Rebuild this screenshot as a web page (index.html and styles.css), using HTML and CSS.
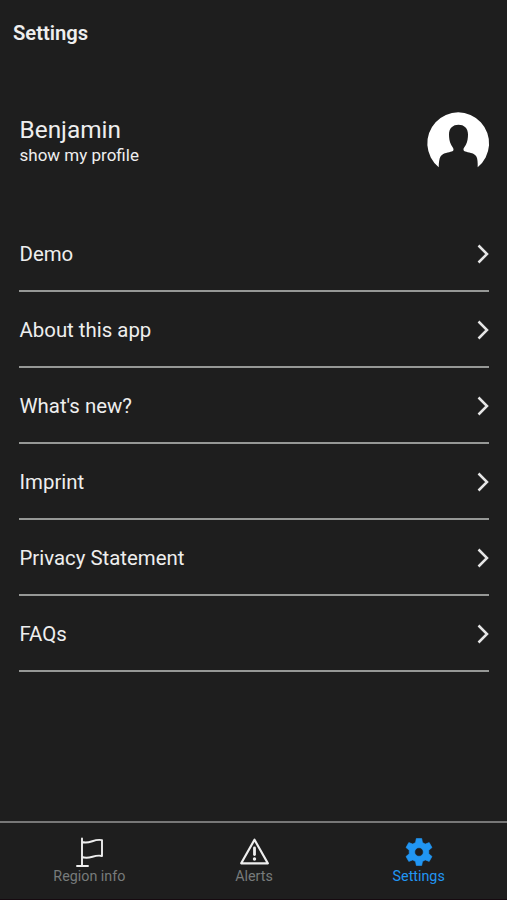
FILE: index.html
```html
<!DOCTYPE html>
<html lang="en">
<head>
<meta charset="utf-8">
<title>Settings</title>
<link rel="stylesheet" href="styles.css">
</head>
<body>
<div class="app">
  <header class="header"><h1>Settings</h1></header>
  <main class="content">
    <section class="profile">
      <div>
        <div class="name">Benjamin</div>
        <div class="link">show my profile</div>
      </div>
      <svg class="avatar" viewBox="0 0 62 62">
        <path fill="#fff" d="M11.700 54.200A30.900 30.900 0 1 1 50.700 54.200C51 44 49.500 41.500 44 40C39 38.800 36.500 38.500 36.500 36.800C36.500 34.500 37.500 34.500 39 31.500C40.500 28.500 41 25 41 21.500C41 15 37 11.700 31.500 11.700S22 15 22 21.500C22 25 22.500 28.500 24 31.500C25.500 34.500 26.500 34.500 26.500 36.800C26.500 38.500 24 38.800 19 40C13.500 41.500 12 44 11.700 54.200Z"/>
      </svg>
    </section>
    <ul class="list">
      <li><span>Demo</span><svg class="chevron" viewBox="0 0 12 20"><path d="M1.500 1.500 10 10 1.500 18.500"/></svg></li>
      <li><span>About this app</span><svg class="chevron" viewBox="0 0 12 20"><path d="M1.500 1.500 10 10 1.500 18.500"/></svg></li>
      <li><span>What's new?</span><svg class="chevron" viewBox="0 0 12 20"><path d="M1.500 1.500 10 10 1.500 18.500"/></svg></li>
      <li><span>Imprint</span><svg class="chevron" viewBox="0 0 12 20"><path d="M1.500 1.500 10 10 1.500 18.500"/></svg></li>
      <li><span>Privacy Statement</span><svg class="chevron" viewBox="0 0 12 20"><path d="M1.500 1.500 10 10 1.500 18.500"/></svg></li>
      <li><span>FAQs</span><svg class="chevron" viewBox="0 0 12 20"><path d="M1.500 1.500 10 10 1.500 18.500"/></svg></li>
    </ul>
  </main>
  <nav class="tabs">
    <a class="tab">
      <svg class="icon" viewBox="0 0 30 30"><g fill="none" stroke="#eee" stroke-width="1.900" stroke-linecap="round" stroke-linejoin="round"><path d="M8 1.500V28.500M3 29H14M8 5C16 7.500 20 1.300 28 3.200V19C20 17 16 23 8 20"/></g></svg>
      <span>Region info</span>
    </a>
    <a class="tab">
      <svg class="icon" viewBox="0 0 30 30"><path fill="none" stroke="#eee" stroke-width="2.200" stroke-linejoin="round" d="M15.500 2.700 28.800 26.300H2.200Z"/><path fill="none" stroke="#eee" stroke-width="2.800" stroke-linecap="round" d="M15.500 11V17.500"/><circle cx="15.500" cy="22" r="1.700" fill="#eee"/></svg>
      <span>Alerts</span>
    </a>
    <a class="tab active">
      <svg class="icon gear" viewBox="0 0 30 30"><path fill="#2196f3" stroke="#2196f3" stroke-width=".6" stroke-linejoin="round" fill-rule="evenodd" d="M12.300 1.500H17.700L18.500 5.500 21.200 7.100 25.200 5.600 28 10.500 24.800 13.200V16.800L28 19.500 25.200 24.400 21.200 22.900 18.500 24.500 17.700 28.500H12.300L11.500 24.500 8.800 22.900 4.800 24.400 2 19.500 5.200 16.800V13.200L2 10.500 4.800 5.600 8.800 7.100 11.500 5.500ZM15 10.700A4.300 4.300 0 1 0 15 19.300A4.300 4.300 0 1 0 15 10.700Z"/></svg>
      <span>Settings</span>
    </a>
  </nav>
</div>
</body>
</html>
```
FILE: styles.css
```css
* { box-sizing: border-box; }
body {
  margin: 0;
  background: #1e1e1e;
  color: #eee;
  font-family: Roboto, sans-serif;
}
.app {
  display: flex;
  flex-direction: column;
  height: 900px;
}
.header {
  height: 66px;
  padding-left: 13px;
}
.header h1 {
  margin: 0;
  font-size: 20.200px;
  font-weight: 600;
  line-height: 66px;
}
.content {
  flex: 1;
  padding: 0 18px 0 19px;
}
.profile {
  display: flex;
  justify-content: space-between;
  height: 150px;
  padding-top: 47px;
}
.name {
  margin-top: 3px;
  padding-left: .5px;
  font-size: 24.400px;
  line-height: 28px;
}
.link {
  padding-left: .5px;
  font-size: 17px;
  line-height: 22px;
}
.avatar {
  width: 62px;
  height: 62px;
  overflow: visible;
}
.list {
  margin: 0;
  padding: 0;
  list-style: none;
}
.list li {
  display: flex;
  align-items: center;
  justify-content: space-between;
  height: 76px;
  padding: 2px 0 0 .5px;
  border-bottom: 2px solid #969896;
  font-size: 20.400px;
}
.chevron {
  width: 12px;
  height: 20px;
  fill: none;
  stroke: #e6e6e6;
  stroke-width: 2.500;
}
.tabs {
  display: flex;
  height: 79px;
  padding: 14px 6px 0 7px;
  border-top: 2px solid #777;
  border-bottom: 1px solid #160a10;
}
.tab {
  display: flex;
  flex: 1;
  flex-direction: column;
  align-items: center;
  color: #777b7b;
  font-size: 14.300px;
  line-height: 18px;
}
.icon {
  width: 30px;
  height: 30px;
}
.active { color: #2196f3; }
```
